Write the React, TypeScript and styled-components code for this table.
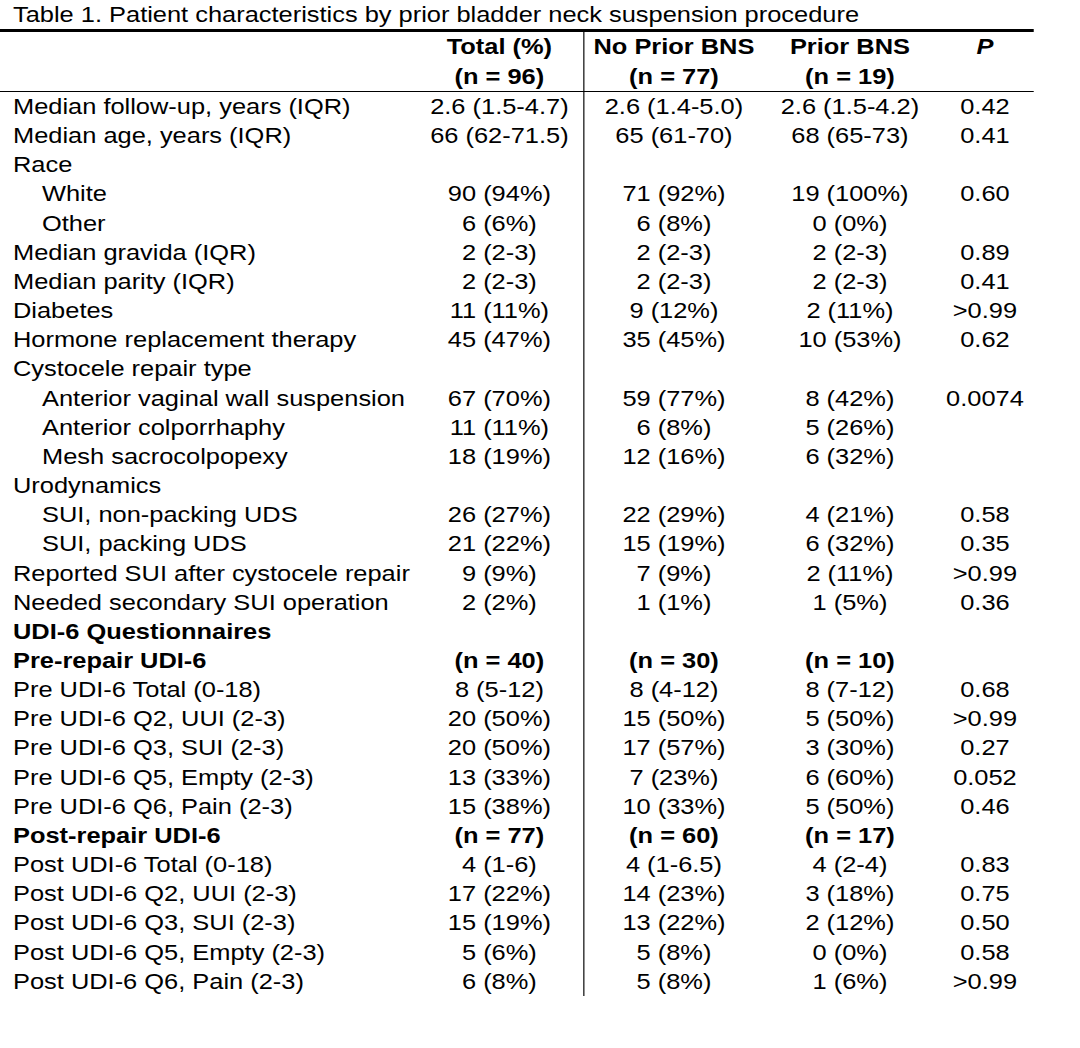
import React from "react";
import styled, { createGlobalStyle } from "styled-components";

const Global = createGlobalStyle`
  html, body { margin: 0; padding: 0; background: #fff; }
  body { font-family: "Liberation Sans", Arial, sans-serif; color: #000; }
`;

/* The source table's glyphs are stretched horizontally by ~1.155 */
const SX = 1.155;
const px = (v: number) => `${(v / SX).toFixed(2)}px`;

const Page = styled.div`
  width: 1080px;
  height: 1048px;
  background: #fff;
  overflow: hidden;
`;

const Table = styled.div`
  width: ${px(1034)};
  font-size: 22px;
  transform: scaleX(${SX});
  transform-origin: 0 0;
`;

const Caption = styled.div`
  height: 29px;
  line-height: 30px;
  padding-left: ${px(13)};
  border-bottom: 3px solid #000;
  white-space: nowrap;
`;

const Cols = [416, 168, 180, 172, 98].map(px).join(" ");

const Row = styled.div<{ $h?: number }>`
  display: grid;
  grid-template-columns: ${Cols};
  height: ${(p) => p.$h ?? 29.17}px;
  line-height: ${(p) => p.$h ?? 29.17}px;
`;

const Header = styled.div`
  border-bottom: 1px solid #000;
`;

const Label = styled.div<{ $indent?: boolean; $bold?: boolean }>`
  padding-left: ${(p) => (p.$indent ? px(42) : px(13))};
  font-weight: ${(p) => (p.$bold ? 700 : 400)};
  white-space: nowrap;
`;

const Cell = styled.div<{ $divider?: boolean; $bold?: boolean; $italic?: boolean }>`
  text-align: center;
  white-space: nowrap;
  font-weight: ${(p) => (p.$bold ? 700 : 400)};
  font-style: ${(p) => (p.$italic ? "italic" : "normal")};
  border-right: ${(p) => (p.$divider ? "1px solid #000" : "none")};
`;

type R = { label: string; v: string[]; indent?: boolean; bold?: boolean };

const rows: R[] = [
  { label: "Median follow-up, years (IQR)", v: ["2.6 (1.5-4.7)", "2.6 (1.4-5.0)", "2.6 (1.5-4.2)", "0.42"] },
  { label: "Median age, years (IQR)", v: ["66 (62-71.5)", "65 (61-70)", "68 (65-73)", "0.41"] },
  { label: "Race", v: ["", "", "", ""] },
  { label: "White", indent: true, v: ["90 (94%)", "71 (92%)", "19 (100%)", "0.60"] },
  { label: "Other", indent: true, v: ["6 (6%)", "6 (8%)", "0 (0%)", ""] },
  { label: "Median gravida (IQR)", v: ["2 (2-3)", "2 (2-3)", "2 (2-3)", "0.89"] },
  { label: "Median parity (IQR)", v: ["2 (2-3)", "2 (2-3)", "2 (2-3)", "0.41"] },
  { label: "Diabetes", v: ["11 (11%)", "9 (12%)", "2 (11%)", ">0.99"] },
  { label: "Hormone replacement therapy", v: ["45 (47%)", "35 (45%)", "10 (53%)", "0.62"] },
  { label: "Cystocele repair type", v: ["", "", "", ""] },
  { label: "Anterior vaginal wall suspension", indent: true, v: ["67 (70%)", "59 (77%)", "8 (42%)", "0.0074"] },
  { label: "Anterior colporrhaphy", indent: true, v: ["11 (11%)", "6 (8%)", "5 (26%)", ""] },
  { label: "Mesh sacrocolpopexy", indent: true, v: ["18 (19%)", "12 (16%)", "6 (32%)", ""] },
  { label: "Urodynamics", v: ["", "", "", ""] },
  { label: "SUI, non-packing UDS", indent: true, v: ["26 (27%)", "22 (29%)", "4 (21%)", "0.58"] },
  { label: "SUI, packing UDS", indent: true, v: ["21 (22%)", "15 (19%)", "6 (32%)", "0.35"] },
  { label: "Reported SUI after cystocele repair", v: ["9 (9%)", "7 (9%)", "2 (11%)", ">0.99"] },
  { label: "Needed secondary SUI operation", v: ["2 (2%)", "1 (1%)", "1 (5%)", "0.36"] },
  { label: "UDI-6 Questionnaires", bold: true, v: ["", "", "", ""] },
  { label: "Pre-repair UDI-6", bold: true, v: ["(n = 40)", "(n = 30)", "(n = 10)", ""] },
  { label: "Pre UDI-6 Total (0-18)", v: ["8 (5-12)", "8 (4-12)", "8 (7-12)", "0.68"] },
  { label: "Pre UDI-6 Q2, UUI (2-3)", v: ["20 (50%)", "15 (50%)", "5 (50%)", ">0.99"] },
  { label: "Pre UDI-6 Q3, SUI (2-3)", v: ["20 (50%)", "17 (57%)", "3 (30%)", "0.27"] },
  { label: "Pre UDI-6 Q5, Empty (2-3)", v: ["13 (33%)", "7 (23%)", "6 (60%)", "0.052"] },
  { label: "Pre UDI-6 Q6, Pain (2-3)", v: ["15 (38%)", "10 (33%)", "5 (50%)", "0.46"] },
  { label: "Post-repair UDI-6", bold: true, v: ["(n = 77)", "(n = 60)", "(n = 17)", ""] },
  { label: "Post UDI-6 Total (0-18)", v: ["4 (1-6)", "4 (1-6.5)", "4 (2-4)", "0.83"] },
  { label: "Post UDI-6 Q2, UUI (2-3)", v: ["17 (22%)", "14 (23%)", "3 (18%)", "0.75"] },
  { label: "Post UDI-6 Q3, SUI (2-3)", v: ["15 (19%)", "13 (22%)", "2 (12%)", "0.50"] },
  { label: "Post UDI-6 Q5, Empty (2-3)", v: ["5 (6%)", "5 (8%)", "0 (0%)", "0.58"] },
  { label: "Post UDI-6 Q6, Pain (2-3)", v: ["6 (8%)", "5 (8%)", "1 (6%)", ">0.99"] },
];

export default function App() {
  return (
    <Page>
      <Global />
      <Table>
        <Caption>Table 1. Patient characteristics by prior bladder neck suspension procedure</Caption>
        <Header>
          <Row $h={29.5}>
            <Label />
            <Cell $bold $divider>Total (%)</Cell>
            <Cell $bold>No Prior BNS</Cell>
            <Cell $bold>Prior BNS</Cell>
            <Cell $bold $italic>P</Cell>
          </Row>
          <Row $h={29.5}>
            <Label />
            <Cell $bold $divider>(n = 96)</Cell>
            <Cell $bold>(n = 77)</Cell>
            <Cell $bold>(n = 19)</Cell>
            <Cell />
          </Row>
        </Header>
        {rows.map((r, i) => (
          <Row key={i}>
            <Label $indent={r.indent} $bold={r.bold}>{r.label}</Label>
            <Cell $divider $bold={r.bold}>{r.v[0]}</Cell>
            <Cell $bold={r.bold}>{r.v[1]}</Cell>
            <Cell $bold={r.bold}>{r.v[2]}</Cell>
            <Cell>{r.v[3]}</Cell>
          </Row>
        ))}
      </Table>
    </Page>
  );
}
